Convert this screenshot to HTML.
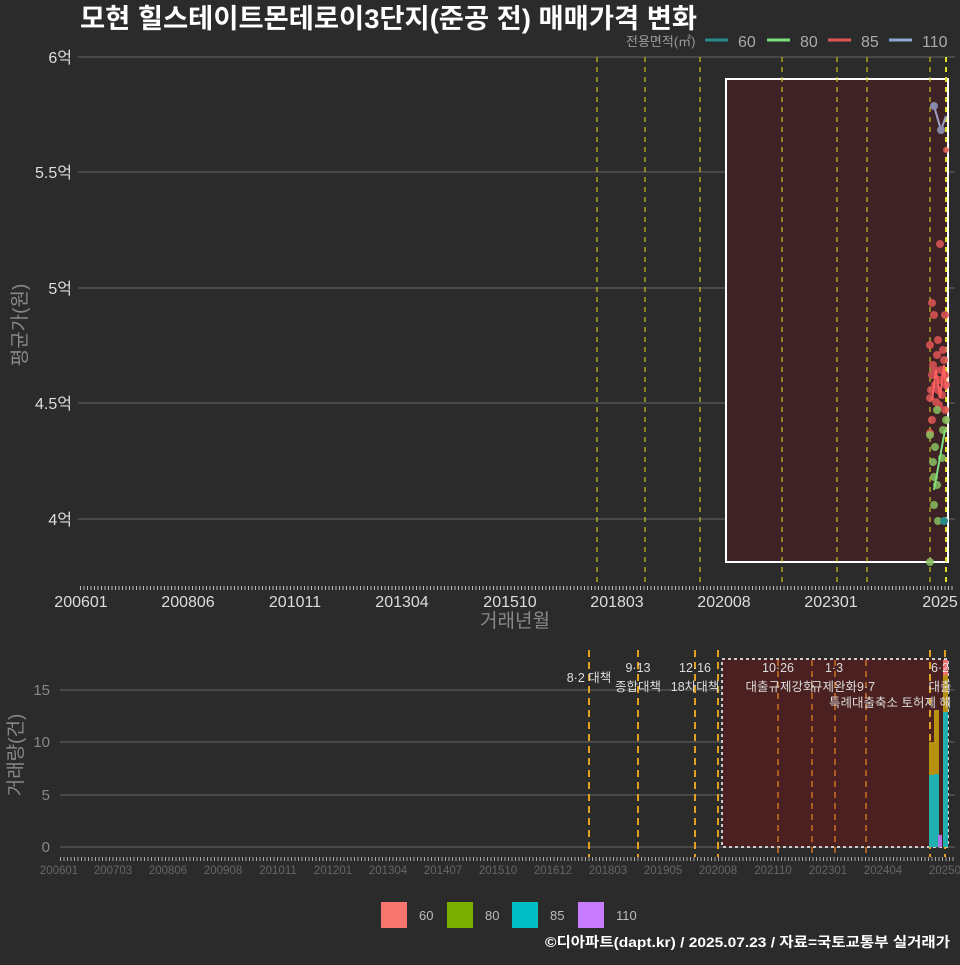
<!DOCTYPE html>
<html><head><meta charset="utf-8"><style>
body{margin:0;background:#2b2b2b;}
text{font-family:"Liberation Sans","Noto Sans CJK KR",sans-serif;}
</style></head><body>
<svg width="960" height="960" xmlns="http://www.w3.org/2000/svg">
<rect width="960" height="960" fill="#2b2b2b"/>
<text x="80" y="28" font-size="27" font-weight="bold" fill="#fff" textLength="617" lengthAdjust="spacingAndGlyphs">모현 힐스테이트몬테로이3단지(준공 전) 매매가격 변화</text>
<text x="626" y="46" font-size="13" fill="#999">전용면적(㎡)</text>
<line x1="705" y1="40" x2="728" y2="40" stroke="#2a8a8a" stroke-width="3"/><text x="738" y="47" font-size="16" fill="#aaa">60</text>
<line x1="767" y1="40" x2="790" y2="40" stroke="#7ee07e" stroke-width="3"/><text x="800" y="47" font-size="16" fill="#aaa">80</text>
<line x1="828" y1="40" x2="851" y2="40" stroke="#e05555" stroke-width="3"/><text x="861" y="47" font-size="16" fill="#aaa">85</text>
<line x1="889" y1="40" x2="912" y2="40" stroke="#8aa8d0" stroke-width="3"/><text x="922" y="47" font-size="16" fill="#aaa">110</text>
<g stroke="#666" stroke-width="1">
<line x1="78" y1="57" x2="955" y2="57"/><line x1="78" y1="172" x2="955" y2="172"/><line x1="78" y1="288" x2="955" y2="288"/><line x1="78" y1="403" x2="955" y2="403"/><line x1="78" y1="519" x2="955" y2="519"/>
</g>
<g font-size="16" fill="#ddd" text-anchor="end">
<text x="72" y="63">6억</text><text x="72" y="178">5.5억</text><text x="72" y="294">5억</text><text x="72" y="409">4.5억</text><text x="72" y="525">4억</text>
</g>
<text transform="translate(26,325) rotate(-90)" font-size="19" fill="#888" text-anchor="middle">평균가(원)</text>
<rect x="726" y="79" width="222" height="483" fill="#3d2226" stroke="#fff" stroke-width="2"/>
<g stroke="#c8c020" stroke-width="1.2" stroke-dasharray="5,5">
<line x1="597" y1="57" x2="597" y2="585"/><line x1="645" y1="57" x2="645" y2="585"/><line x1="700" y1="57" x2="700" y2="585"/><line x1="782" y1="57" x2="782" y2="585"/><line x1="837" y1="57" x2="837" y2="585"/><line x1="867" y1="57" x2="867" y2="585"/><line x1="930" y1="57" x2="930" y2="585"/><line x1="946" y1="57" x2="946" y2="585" stroke="#e0e020" stroke-width="2"/>
</g>
<g fill="#e05555" opacity="0.85">
<circle cx="932" cy="303" r="4"/><circle cx="934" cy="315" r="4"/><circle cx="930" cy="345" r="4"/><circle cx="937" cy="355" r="4"/><circle cx="935" cy="370" r="4"/><circle cx="940" cy="380" r="4"/><circle cx="930" cy="398" r="4"/><circle cx="936" cy="402" r="4"/><circle cx="942" cy="395" r="4"/><circle cx="945" cy="410" r="4"/><circle cx="932" cy="420" r="4"/><circle cx="940" cy="244" r="4"/><circle cx="945" cy="315" r="4"/><circle cx="946" cy="150" r="3"/><circle cx="938" cy="340" r="4"/><circle cx="930" cy="433" r="4"/><circle cx="944" cy="360" r="4"/><circle cx="938" cy="390" r="4"/><circle cx="932" cy="375" r="4"/>
<circle cx="933" cy="365" r="4"/><circle cx="935" cy="385" r="4"/><circle cx="941" cy="370" r="4"/><circle cx="945" cy="375" r="4"/><circle cx="946" cy="385" r="4"/><circle cx="943" cy="350" r="4"/><circle cx="931" cy="390" r="4"/><circle cx="939" cy="405" r="4"/>
</g>
<polyline points="932,400 936,370 940,398 944,365 946,390" stroke="#ff6060" stroke-width="2" fill="none"/>
<g fill="#88c060" opacity="0.85">
<circle cx="937" cy="410" r="4"/><circle cx="930" cy="435" r="4"/><circle cx="935" cy="447" r="4"/><circle cx="933" cy="462" r="4"/><circle cx="942" cy="458" r="4"/><circle cx="934" cy="477" r="4"/><circle cx="937" cy="485" r="4"/><circle cx="934" cy="505" r="4"/><circle cx="938" cy="521" r="4"/><circle cx="943" cy="430" r="4"/><circle cx="930" cy="562" r="4"/><circle cx="946" cy="420" r="4"/>
</g>
<line x1="934" y1="490" x2="945" y2="430" stroke="#7ee07e" stroke-width="2"/>
<circle cx="944" cy="521" r="4" fill="#2a8a8a"/>
<polyline points="934,106 941,130 946,116" stroke="#a0a0c8" stroke-width="2" fill="none"/>
<circle cx="934" cy="106" r="4" fill="#8888aa"/><circle cx="941" cy="130" r="4" fill="#8888aa"/>
<line x1="80" y1="588" x2="955" y2="588" stroke="#bbb" stroke-width="4" stroke-dasharray="1,2.5"/>
<g font-size="16" fill="#ddd" text-anchor="middle">
<text x="81" y="607">200601</text><text x="188" y="607">200806</text><text x="295" y="607">201011</text><text x="402" y="607">201304</text><text x="510" y="607">201510</text><text x="617" y="607">201803</text><text x="724" y="607">202008</text><text x="831" y="607">202301</text><text x="940" y="607">2025</text>
</g>
<text x="515" y="627" font-size="19" fill="#888" text-anchor="middle">거래년월</text>

<g stroke="#666" stroke-width="1">
<line x1="60" y1="690" x2="955" y2="690"/><line x1="60" y1="742" x2="955" y2="742"/><line x1="60" y1="795" x2="955" y2="795"/><line x1="60" y1="847" x2="955" y2="847"/>
</g>
<g font-size="15" fill="#888" text-anchor="end">
<text x="50" y="695">15</text><text x="50" y="747">10</text><text x="50" y="800">5</text><text x="50" y="852">0</text>
</g>
<text transform="translate(22,755) rotate(-90)" font-size="19" fill="#888" text-anchor="middle">거래량(건)</text>
<rect x="722" y="659" width="226" height="188" fill="#4a2020" stroke="#ccc" stroke-width="2" stroke-dasharray="3,3"/>
<g stroke="#e0a020" stroke-width="2" stroke-dasharray="7,5">
<line x1="589" y1="650" x2="589" y2="857"/><line x1="638" y1="650" x2="638" y2="857"/><line x1="695" y1="650" x2="695" y2="857"/><line x1="718" y1="650" x2="718" y2="857"/><line x1="930" y1="650" x2="930" y2="857"/><line x1="945" y1="650" x2="945" y2="857"/>
</g>
<g stroke="#d07020" stroke-width="1.5" stroke-dasharray="6,5">
<line x1="778" y1="660" x2="778" y2="857"/><line x1="812" y1="660" x2="812" y2="857"/><line x1="835" y1="660" x2="835" y2="857"/><line x1="866" y1="660" x2="866" y2="857"/>
</g>
<rect x="929" y="742" width="5" height="105" fill="#b89010"/><rect x="929" y="775" width="5" height="72" fill="#20b0b0"/>
<rect x="934" y="710" width="5" height="137" fill="#b89010"/><rect x="934" y="774" width="5" height="73" fill="#20b0b0"/>
<rect x="943" y="660" width="5" height="187" fill="#b89010"/><rect x="943" y="660" width="5" height="15" fill="#f07070"/><rect x="943" y="712" width="5" height="135" fill="#20b0b0"/>
<rect x="938" y="835" width="4" height="12" fill="#b070e0"/>
<g font-size="12.5" fill="#ddd" text-anchor="middle">
<text x="589" y="682">8·2 대책</text><text x="638" y="672">9·13</text><text x="638" y="691">종합대책</text><text x="695" y="672">12·16</text><text x="695" y="691">18차대책</text>
<text x="778" y="672">10·26</text><text x="780" y="691">대출규제강화</text><text x="834" y="672">1·3</text><text x="843" y="691">규제완화9·7</text><text x="890" y="707">특례대출축소 토허제 해</text><text x="940" y="672">6·2</text><text x="940" y="691">대출</text>
</g>
<line x1="60" y1="859" x2="955" y2="859" stroke="#aaa" stroke-width="4" stroke-dasharray="1,2.5"/>
<g font-size="11.5" fill="#666" text-anchor="middle">
<text x="59" y="874">200601</text><text x="113" y="874">200703</text><text x="168" y="874">200806</text><text x="223" y="874">200908</text><text x="278" y="874">201011</text><text x="333" y="874">201201</text><text x="388" y="874">201304</text><text x="443" y="874">201407</text><text x="498" y="874">201510</text><text x="553" y="874">201612</text><text x="608" y="874">201803</text><text x="663" y="874">201905</text><text x="718" y="874">202008</text><text x="773" y="874">202110</text><text x="828" y="874">202301</text><text x="883" y="874">202404</text><text x="945" y="874">20250</text>
</g>
<rect x="381" y="902" width="26" height="26" fill="#f8766d"/><text x="419" y="920" font-size="13" fill="#bbb">60</text>
<rect x="447" y="902" width="26" height="26" fill="#7cae00"/><text x="485" y="920" font-size="13" fill="#bbb">80</text>
<rect x="512" y="902" width="26" height="26" fill="#00bfc4"/><text x="550" y="920" font-size="13" fill="#bbb">85</text>
<rect x="578" y="902" width="26" height="26" fill="#c77cff"/><text x="616" y="920" font-size="13" fill="#bbb">110</text>
<text x="950" y="947" font-size="14" font-weight="bold" fill="#fff" text-anchor="end" textLength="405" lengthAdjust="spacingAndGlyphs">©디아파트(dapt.kr) / 2025.07.23 / 자료=국토교통부 실거래가</text>
</svg>
</body></html>
